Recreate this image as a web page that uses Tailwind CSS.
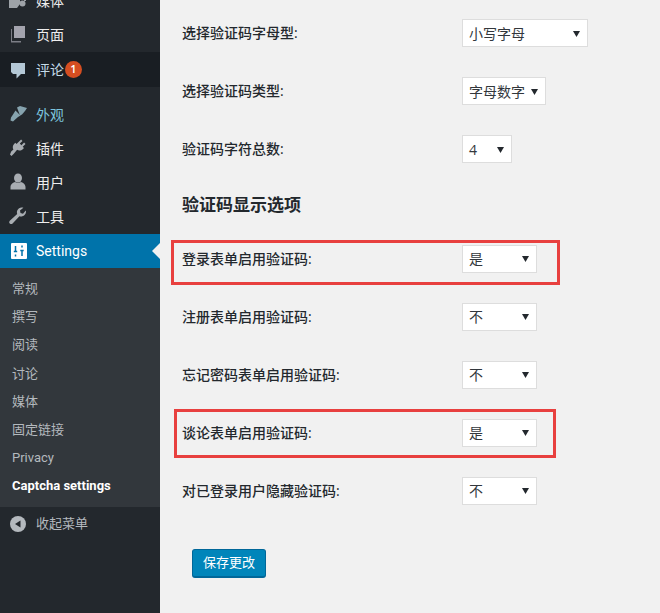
<!DOCTYPE html>
<html lang="zh-CN">
<head>
<meta charset="utf-8">
<title>Captcha settings</title>
<script src="https://cdn.jsdelivr.net/npm/@tailwindcss/browser@4"></script>
</head>
<body class="bg-[#f1f1f1] overflow-hidden font-['Open_Sans','Noto_Sans_CJK_SC',sans-serif]">
<div class="relative flex w-[660px] h-[613px] overflow-hidden">
  <aside class="w-[160px] h-full shrink-0 bg-[#23282d] text-[14px] text-[#eeeeee] overflow-hidden">
    <nav class="-mt-[16px]">
      <a class="flex items-center h-[34px] pb-[2px]">
        <svg class="ml-[8px] w-[20px] h-[20px] text-[#9ea3a8]" viewBox="0 0 20 20" fill="currentColor"><path d="M1 3h11v11l-3 4H1z"/><circle cx="14.500" cy="13.500" r="3"/><path d="M13 3h5v8h-2V5h-3z"/></svg>
        <span class="ml-[8px]">媒体</span>
      </a>
      <a class="flex items-center h-[34px] pb-[2px]">
        <svg class="ml-[10px] w-[16px] h-[18px] text-[#a3a3ad]" viewBox="0 0 16 18" fill="currentColor"><path d="M4 1h11v12H4z"/><path d="M2 4v12h9v1.500H1V4z" opacity=".7"/></svg>
        <span class="ml-[10px]">页面</span>
      </a>
      <a class="flex items-center h-[35px] bg-[#191e23] text-[#c3dbe8]">
        <svg class="ml-[8px] w-[20px] h-[20px] text-[#b4c8d6]" viewBox="0 0 20 20" fill="currentColor"><path d="M3 3h14v11h-4l-4.500 4.500V14H5l-2-2z"/></svg>
        <span class="ml-[8px]">评论</span>
        <span class="ml-[1px] w-[17px] h-[17px] rounded-full bg-[#d54e21] text-white text-[11px] font-semibold flex items-center justify-center">1</span>
      </a>
      <a class="flex items-center h-[34px] mt-[11px] pb-[2px] text-[#7cc4dd]">
        <svg class="ml-[8px] w-[20px] h-[20px] text-[#86a3ae]" viewBox="0 0 20 20" fill="currentColor"><path d="M9 3.500l3-1.500 7 2-2 3-3 3.500-2 1z"/><path d="M7.500 6.500l5 5-2.500 1.500-5 4.500-2.500-1 .5-3 2-3z"/></svg>
        <span class="ml-[8px]">外观</span>
      </a>
      <a class="flex items-center h-[34px] pb-[2px]">
        <svg class="ml-[8px] w-[20px] h-[20px] text-[#a8adb2]" viewBox="0 0 20 20" fill="currentColor"><path d="M13.100 1.500l1.400 1.400-2.700 2.700 1.600 1.600 2.700-2.700 1.400 1.400-2.800 2.800 1.300 1.300-1.200 1.200c-1.600 1.600-4 1.800-5.700.6L6 15.500 3.500 18 2 16.500l1.200-3 2.200-2c-1-1.700-.8-4 .7-5.500L7.300 4.800l1.200 1.200z"/></svg>
        <span class="ml-[8px]">插件</span>
      </a>
      <a class="flex items-center h-[34px] pb-[2px]">
        <svg class="ml-[8px] w-[20px] h-[20px] text-[#a8adb2]" viewBox="0 0 20 20" fill="currentColor"><ellipse cx="10" cy="6" rx="4" ry="4.500"/><path d="M2.500 15c0-3 3-4.500 4.500-5 1 1 5 1 6 0 1.500.5 4.500 2 4.500 5v2.500h-15z"/></svg>
        <span class="ml-[8px]">用户</span>
      </a>
      <a class="flex items-center h-[34px] pb-[2px]">
        <svg class="ml-[8px] w-[20px] h-[20px] text-[#a8adb2]" viewBox="0 0 20 20" fill="currentColor"><path d="M18 5.500c0 2.800-2.200 5-5 5-.6 0-1.100-.1-1.600-.3l-6.800 7.300c-.8.800-2 .8-2.800 0s-.8-2 0-2.800l7.400-6.700c-.2-.5-.3-1-.3-1.500 0-2.800 2.200-5 5-5 .6 0 1.100.1 1.500.3L12 4.500l.5 2.500 2.500.7 2.700-3.300c.2.300.3.700.3 1.100z"/></svg>
        <span class="ml-[8px]">工具</span>
      </a>
      <a class="relative flex items-center h-[34px] bg-[#0073aa] text-white">
        <svg class="ml-[11px] w-[16px] h-[16px]" viewBox="0 0 16 16"><rect width="16" height="16" rx="1" fill="#fff"/><path d="M4.500 3v6M2.800 8.500h3.400M4.500 11.500v2M11 13V7M9.300 7.500h3.400M11 4.500v-2" stroke="#0073aa" stroke-width="1.500" fill="none"/></svg>
        <span class="ml-[9px] font-['Roboto',sans-serif]">Settings</span>
        <span class="absolute right-0 top-[9px] border-y-[8px] border-r-[8px] border-y-transparent border-r-[#f1f1f1]"></span>
      </a>
      <ul class="bg-[#32373c] text-[13px] text-[#b4b9be] pt-[7px] pb-[7px]">
        <li class="h-[28.1px] pl-[12px] flex items-center">常规</li>
        <li class="h-[28.1px] pl-[12px] flex items-center">撰写</li>
        <li class="h-[28.1px] pl-[12px] flex items-center">阅读</li>
        <li class="h-[28.1px] pl-[12px] flex items-center">讨论</li>
        <li class="h-[28.1px] pl-[12px] flex items-center">媒体</li>
        <li class="h-[28.1px] pl-[12px] flex items-center">固定链接</li>
        <li class="h-[28.1px] pl-[12px] flex items-center font-['Roboto',sans-serif]">Privacy</li>
        <li class="h-[28.1px] pl-[12px] flex items-center font-bold text-white font-['Roboto',sans-serif]">Captcha settings</li>
      </ul>
      <button class="flex items-center h-[34px] w-full text-[13px] text-[#b4b9be]">
        <svg class="ml-[10px] w-[16px] h-[16px]" viewBox="0 0 16 16"><circle cx="8" cy="8" r="8" fill="#b4b9be"/><path d="M10.500 4.500v7L5 8z" fill="#23282d"/></svg>
        <span class="ml-[10px]">收起菜单</span>
      </button>
    </nav>
  </aside>

  <main class="flex-1 pl-[22px] pt-[19px] text-[14px] text-[#23282d]">
    <div class="flex h-[58px]"><label class="w-[280px] h-[28px] pb-[2px] flex items-center font-medium">选择验证码字母型:</label><div class="flex items-center justify-between w-[126px] h-[28px] pl-[6px] pr-[7px] bg-white border border-[#dddddd] text-[#32373c]"><span>小写字母</span><svg class="w-[7px] h-[7px] text-[#23282d]" viewBox="0 0 7 7" fill="currentColor"><path d="M0 1h7L3.500 7z"/></svg></div></div>
    <div class="flex h-[58px]"><label class="w-[280px] h-[28px] pb-[2px] flex items-center font-medium">选择验证码类型:</label><div class="flex items-center justify-between w-[84px] h-[28px] pl-[6px] pr-[7px] bg-white border border-[#dddddd] text-[#32373c]"><span>字母数字</span><svg class="w-[7px] h-[7px] text-[#23282d]" viewBox="0 0 7 7" fill="currentColor"><path d="M0 1h7L3.500 7z"/></svg></div></div>
    <div class="flex h-[58px]"><label class="w-[280px] h-[28px] pb-[2px] flex items-center font-medium">验证码字符总数:</label><div class="flex items-center justify-between w-[50px] h-[28px] pl-[6px] pr-[7px] bg-white border border-[#dddddd] text-[#32373c]"><span>4</span><svg class="w-[7px] h-[7px] text-[#23282d]" viewBox="0 0 7 7" fill="currentColor"><path d="M0 1h7L3.500 7z"/></svg></div></div>
    <h2 class="h-[52px] text-[17px] font-bold leading-[24px]">验证码显示选项</h2>
    <div class="flex h-[58px]"><label class="w-[280px] h-[28px] pb-[2px] flex items-center font-medium">登录表单启用验证码:</label><div class="flex items-center justify-between w-[75px] h-[28px] pl-[6px] pr-[7px] pb-[2px] bg-white border border-[#dddddd] text-[#32373c]"><span>是</span><svg class="w-[7px] h-[7px] text-[#23282d]" viewBox="0 0 7 7" fill="currentColor"><path d="M0 1h7L3.500 7z"/></svg></div></div>
    <div class="flex h-[58px]"><label class="w-[280px] h-[28px] pb-[2px] flex items-center font-medium">注册表单启用验证码:</label><div class="flex items-center justify-between w-[75px] h-[28px] pl-[6px] pr-[7px] pb-[2px] bg-white border border-[#dddddd] text-[#32373c]"><span>不</span><svg class="w-[7px] h-[7px] text-[#23282d]" viewBox="0 0 7 7" fill="currentColor"><path d="M0 1h7L3.500 7z"/></svg></div></div>
    <div class="flex h-[58px]"><label class="w-[280px] h-[28px] pb-[2px] flex items-center font-medium">忘记密码表单启用验证码:</label><div class="flex items-center justify-between w-[75px] h-[28px] pl-[6px] pr-[7px] pb-[2px] bg-white border border-[#dddddd] text-[#32373c]"><span>不</span><svg class="w-[7px] h-[7px] text-[#23282d]" viewBox="0 0 7 7" fill="currentColor"><path d="M0 1h7L3.500 7z"/></svg></div></div>
    <div class="flex h-[58px]"><label class="w-[280px] h-[28px] pb-[2px] flex items-center font-medium">谈论表单启用验证码:</label><div class="flex items-center justify-between w-[75px] h-[28px] pl-[6px] pr-[7px] pb-[2px] bg-white border border-[#dddddd] text-[#32373c]"><span>是</span><svg class="w-[7px] h-[7px] text-[#23282d]" viewBox="0 0 7 7" fill="currentColor"><path d="M0 1h7L3.500 7z"/></svg></div></div>
    <div class="flex h-[58px]"><label class="w-[280px] h-[28px] pb-[2px] flex items-center font-medium">对已登录用户隐藏验证码:</label><div class="flex items-center justify-between w-[75px] h-[28px] pl-[6px] pr-[7px] pb-[2px] bg-white border border-[#dddddd] text-[#32373c]"><span>不</span><svg class="w-[7px] h-[7px] text-[#23282d]" viewBox="0 0 7 7" fill="currentColor"><path d="M0 1h7L3.500 7z"/></svg></div></div>
    <button class="block mt-[14px] ml-[10px] w-[74px] h-[29px] bg-[#0085ba] border border-[#006799] rounded-[3px] border-b-2 text-white text-[13px]">保存更改</button>
  </main>

  <div class="absolute left-[171px] top-[240px] w-[389px] h-[45px] border-[3px] border-[#e8403f]"></div>
  <div class="absolute left-[174px] top-[409px] w-[382px] h-[49px] border-[3px] border-[#e8403f]"></div>
</div>
</body>
</html>
